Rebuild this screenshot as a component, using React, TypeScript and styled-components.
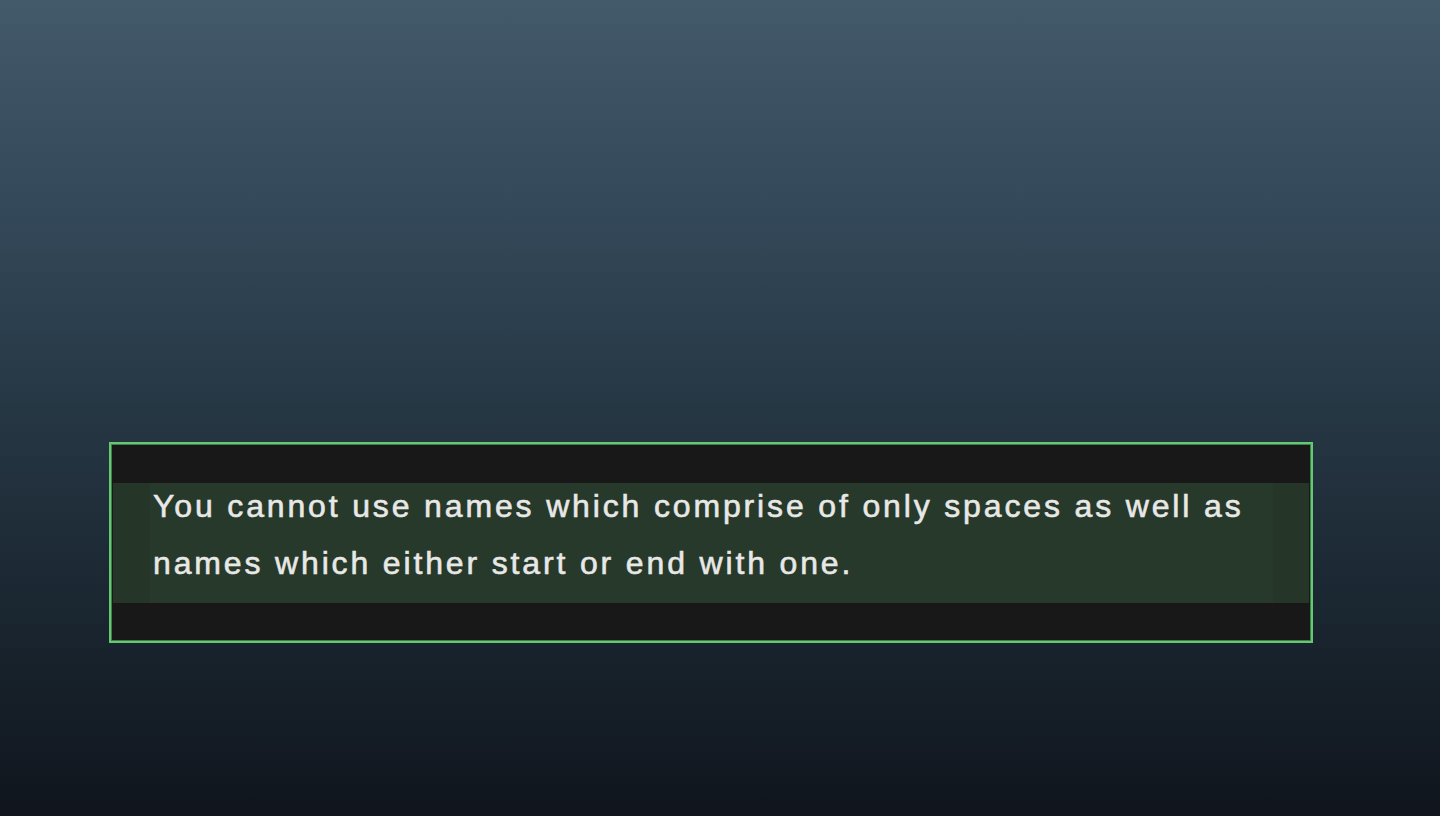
import styled, { createGlobalStyle } from "styled-components";

const GlobalStyle = createGlobalStyle`
  html, body {
    margin: 0;
    padding: 0;
  }
  body {
    font-family: "Liberation Sans", Arial, sans-serif;
  }
`;

const message =
  "You cannot use names which comprise of only spaces as well as names which either start or end with one.";

const Screen = styled.main`
  width: 1440px;
  height: 816px;
  box-sizing: border-box;
  padding: 442px 127px 0 109px;
  background: linear-gradient(
    to bottom,
    #435a6b 0%,
    #34495a 25%,
    #263744 50%,
    #1a2630 75%,
    #10151d 100%
  );
  overflow: hidden;
`;

const Dialog = styled.section`
  box-sizing: border-box;
  height: 201px;
  padding: 39px 2px 38px;
  background: #181818;
  border: 2px solid #66c872;
  box-shadow: inset 0 0 0 1px #3f7f48;
  display: flex;
  flex-direction: column;
`;

const Band = styled.div`
  height: 120px;
  background: #253628;
  display: flex;
`;

const Inner = styled.div`
  flex: 1;
  margin: 0 36px 0 37px;
  padding-left: 3px;
  background: #27392b;
`;

const Message = styled.p`
  margin: -5px 0 0;
  width: 1110px;
  font-family: "Liberation Sans", Arial, sans-serif;
  font-size: 32px;
  line-height: 57px;
  letter-spacing: 2.85px;
  color: #e8e8e6;
  -webkit-text-stroke: 0.6px #e8e8e6;
`;

export const App = () => {
  return (
    <>
      <GlobalStyle />
      <Screen>
        <Dialog>
          <Band>
            <Inner>
              <Message>{message}</Message>
            </Inner>
          </Band>
        </Dialog>
      </Screen>
    </>
  );
};

export default App;
